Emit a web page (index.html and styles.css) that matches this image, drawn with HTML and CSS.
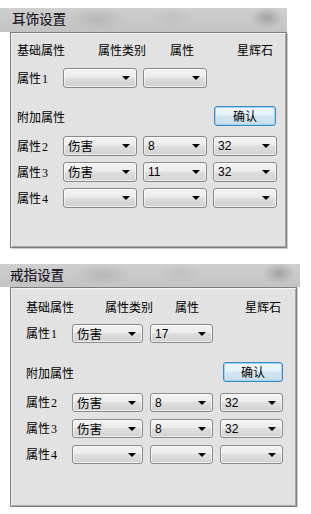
FILE: index.html
```html
<!DOCTYPE html>
<html lang="zh">
<head>
<meta charset="utf-8">
<link rel="stylesheet" href="styles.css">
</head>
<body>
<div class="page">
  <section class="win win-a">
    <div class="titlebar">耳饰设置</div>
    <div class="panel">
      <div class="head"><span>基础属性</span><span>属性类别</span><span>属性</span><span>星辉石</span></div>
      <div class="row row-first">
        <span class="lbl">属性<i>1</i></span>
        <div class="combo c1"><span class="val"></span><b class="arrow"></b></div>
        <div class="combo c2"><span class="val"></span><b class="arrow"></b></div>
      </div>
      <div class="extra"><span>附加属性</span><div class="btn">确认</div></div>
      <div class="row row-a">
        <span class="lbl">属性<i>2</i></span>
        <div class="combo c1"><span class="val cjk">伤害</span><b class="arrow"></b></div>
        <div class="combo c2"><span class="val">8</span><b class="arrow"></b></div>
        <div class="combo c3"><span class="val">32</span><b class="arrow"></b></div>
      </div>
      <div class="row">
        <span class="lbl">属性<i>3</i></span>
        <div class="combo c1"><span class="val cjk">伤害</span><b class="arrow"></b></div>
        <div class="combo c2"><span class="val">11</span><b class="arrow"></b></div>
        <div class="combo c3"><span class="val">32</span><b class="arrow"></b></div>
      </div>
      <div class="row">
        <span class="lbl">属性<i>4</i></span>
        <div class="combo c1"><span class="val"></span><b class="arrow"></b></div>
        <div class="combo c2"><span class="val"></span><b class="arrow"></b></div>
        <div class="combo c3"><span class="val"></span><b class="arrow"></b></div>
      </div>
    </div>
  </section>

  <section class="win win-b">
    <div class="titlebar">戒指设置</div>
    <div class="panel">
      <div class="head"><span>基础属性</span><span>属性类别</span><span>属性</span><span>星辉石</span></div>
      <div class="row row-first">
        <span class="lbl">属性<i>1</i></span>
        <div class="combo c1"><span class="val cjk">伤害</span><b class="arrow"></b></div>
        <div class="combo c2"><span class="val">17</span><b class="arrow"></b></div>
      </div>
      <div class="extra"><span>附加属性</span><div class="btn">确认</div></div>
      <div class="row row-a">
        <span class="lbl">属性<i>2</i></span>
        <div class="combo c1"><span class="val cjk">伤害</span><b class="arrow"></b></div>
        <div class="combo c2"><span class="val">8</span><b class="arrow"></b></div>
        <div class="combo c3"><span class="val">32</span><b class="arrow"></b></div>
      </div>
      <div class="row">
        <span class="lbl">属性<i>3</i></span>
        <div class="combo c1"><span class="val cjk">伤害</span><b class="arrow"></b></div>
        <div class="combo c2"><span class="val">8</span><b class="arrow"></b></div>
        <div class="combo c3"><span class="val">32</span><b class="arrow"></b></div>
      </div>
      <div class="row">
        <span class="lbl">属性<i>4</i></span>
        <div class="combo c1"><span class="val"></span><b class="arrow"></b></div>
        <div class="combo c2"><span class="val"></span><b class="arrow"></b></div>
        <div class="combo c3"><span class="val"></span><b class="arrow"></b></div>
      </div>
    </div>
  </section>
</div>
</body>
</html>
```

FILE: styles.css
```css
* { box-sizing: border-box; }
html, body { margin: 0; padding: 0; background: #fff; }
body {
  font-family: "Noto Sans CJK SC", "Noto Sans", sans-serif;
  font-size: 12px;
  color: #000;
}
.page { display: flex; flex-direction: column; }

.win { display: flex; flex-direction: column; }
.win-a { margin-top: 8px; width: 287px; }
.win-b { margin-top: 16px; width: 300px; }

.titlebar {
  font-size: 13.5px;
  color: #141414;
  text-shadow: 0.5px 0 0 rgba(60, 0, 120, 0.35);
  background:
    radial-gradient(ellipse 16px 11px at 93% 40%, rgba(125,125,125,0.5), rgba(125,125,125,0) 100%),
    radial-gradient(ellipse 30px 12px at 34% 45%, rgba(155,155,155,0.4), rgba(155,155,155,0) 100%),
    radial-gradient(ellipse 22px 10px at 60% 40%, rgba(170,170,170,0.3), rgba(170,170,170,0) 100%),
    linear-gradient(#cfcfcf, #c3c3c3);
}
.win-a .titlebar { height: 24px; line-height: 20px; padding-left: 12px; }
.win-b .titlebar { height: 23px; line-height: 20px; padding-left: 10px; }

.panel {
  margin-left: 10px;
  background: #e2e2e2;
  border: 1px solid #7d7d7d;
  box-shadow: inset 1px 1px 0 #f4f4f4, inset -1px -1px 0 #a9a9a9, 1px 1px 0 #cfcfcf;
  display: flex;
  flex-direction: column;
}
.win-a .panel { width: 277px; height: 216px; padding: 9px 0 0 6px; }
.win-b .panel { width: 287px; height: 220px; padding: 11px 0 0 15px; }

.head { display: flex; line-height: 16px; }
.win-a .head span:nth-child(1) { width: 81px; }
.win-a .head span:nth-child(2) { width: 72px; }
.win-a .head span:nth-child(3) { width: 67px; }
.win-b .head span:nth-child(1) { width: 79px; }
.win-b .head span:nth-child(2) { width: 70px; }
.win-b .head span:nth-child(3) { width: 70px; }

.row { display: flex; align-items: center; }
.win-a .row { gap: 6px; margin-top: 6px; }
.win-b .row { gap: 7px; margin-top: 7px; }
.win-a .row-first { margin-top: 10px; }
.win-b .row-first { margin-top: 9px; }
.win-a .row-a { margin-top: 10px; }
.win-b .row-a { margin-top: 11px; }

.lbl { line-height: 16px; white-space: nowrap; }
.lbl i { font-style: normal; font-family: "Liberation Serif", serif; font-size: 12px; margin-left: 1px; }
.win-a .lbl { width: 40px; }
.win-b .lbl { width: 39px; }

.combo {
  display: flex;
  align-items: center;
  justify-content: space-between;
  padding: 0 6px 0 4px;
  border: 1px solid #8a8a8a;
  border-radius: 3px;
  background: linear-gradient(#f3f3f3 0%, #ececec 45%, #dedede 50%, #d2d2d2 100%);
  box-shadow: inset 0 0 0 1px rgba(255,255,255,0.6);
}
.win-a .combo { height: 20px; }
.win-b .combo { height: 19px; }
.win-a .c1 { width: 74px; }
.win-a .c2, .win-a .c3 { width: 64px; }
.win-b .c1 { width: 71px; }
.win-b .c2, .win-b .c3 { width: 63px; }

.val {
  font-family: "Liberation Sans", "DejaVu Sans", sans-serif;
  font-size: 12px;
  line-height: 14px;
  color: #000;
}
.val.cjk { font-family: "Noto Sans CJK SC", sans-serif; font-size: 12.5px; }

.arrow {
  width: 0; height: 0;
  border-left: 4px solid transparent;
  border-right: 4px solid transparent;
  border-top: 4px solid #000;
}

.extra { display: flex; align-items: center; justify-content: space-between; }
.win-a .extra { width: 260px; margin-top: 18px; padding-right: 1px; }
.win-b .extra { width: 257px; margin-top: 19px; }

.btn {
  height: 20px;
  line-height: 18px;
  text-align: center;
  border: 1px solid #3c88c0;
  border-radius: 3px;
  background: linear-gradient(#eef7fc 0%, #e4f1f9 45%, #d3e6f2 50%, #c6dded 100%);
  box-shadow: inset 0 0 0 1px #9fd4f2;
}
.win-a .btn { width: 62px; }
.win-b .btn { width: 60px; }
```
